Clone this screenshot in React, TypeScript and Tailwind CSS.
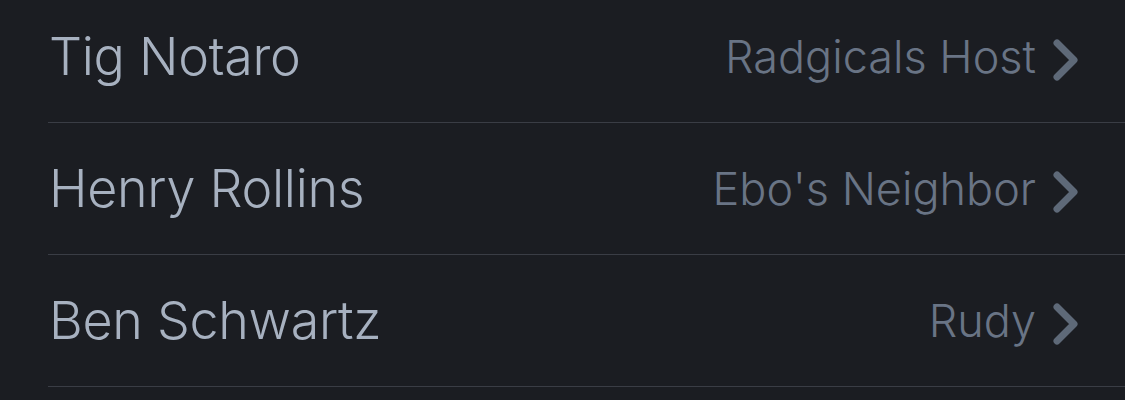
const rows = [
  { name: "Tig Notaro", role: "Radgicals Host" },
  { name: "Henry Rollins", role: "Ebo's Neighbor" },
  { name: "Ben Schwartz", role: "Rudy" },
];

function Chevron() {
  return (
    <svg width="28" height="42" viewBox="0 0 28 42" className="shrink-0">
      <path
        d="M6 4 L23 21 L6 38"
        fill="none"
        stroke="#5e6978"
        strokeWidth="7"
        strokeLinecap="round"
        strokeLinejoin="round"
      />
    </svg>
  );
}

export default function App() {
  return (
    <div
      className="h-[400px] w-[1125px] overflow-hidden bg-[#1b1d22]"
      style={{ fontFamily: "Inter, 'Noto Sans', sans-serif" }}
    >
      <div className="-mt-[9px] pl-[48px]">
        {rows.map((row) => (
          <div
            key={row.name}
            className="flex h-[132px] items-center justify-between border-b border-[#3a3d45] pr-[46px]"
          >
            <span className="pl-[1px] text-[52px] font-light leading-none tracking-[-0.3px] text-[#a7b1c0]">
              {row.name}
            </span>
            <div className="flex items-center gap-[15px]">
              <span className="text-[45px] font-light leading-none text-[#697485]">
                {row.role}
              </span>
              <div className="mt-[6px]">
                <Chevron />
              </div>
            </div>
          </div>
        ))}
      </div>
    </div>
  );
}
